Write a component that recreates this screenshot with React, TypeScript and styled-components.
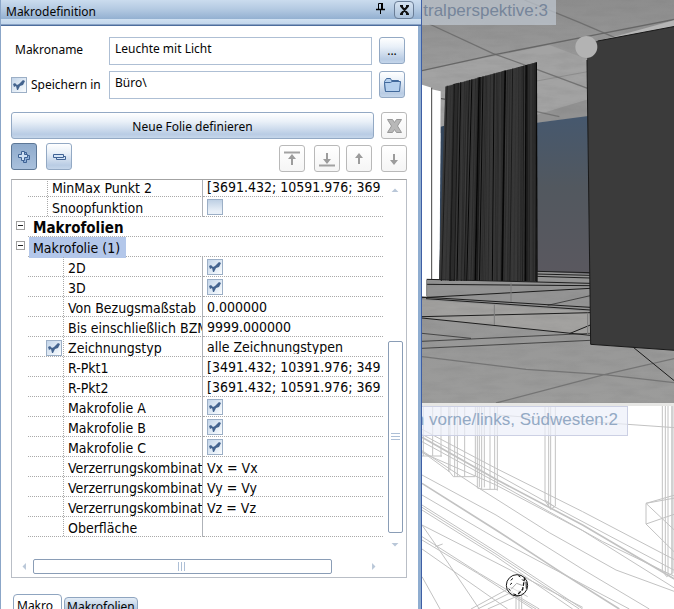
import React, { useState } from "react";
import styled, { createGlobalStyle, css } from "styled-components";

const uiFont = `"Noto Sans", "Open Sans", sans-serif`;
const gridFont = `"DejaVu Sans Condensed", "DejaVu Sans", sans-serif`;

const GlobalStyle = createGlobalStyle`
  *, *::before, *::after { box-sizing: border-box; }
  body { margin: 0; background: #fff; color: #050505; font: 12px/16px ${uiFont}; overflow: hidden; }
  button, input { font: inherit; color: inherit; margin: 0; padding: 0; }
`;

const Workspace = styled.div`
  display: flex;
  height: 100vh;
  overflow: hidden;
`;

/* ---------- docked panel ---------- */

const Panel = styled.section`
  flex: 5 1 0;
  min-width: 0;
  display: flex;
  flex-direction: column;
  background: #fff;
  border-left: 1px solid #8ba6c8;
  border-right: 1px solid #3f5fa5;
  overflow: hidden;
`;

const TitleBar = styled.header`
  flex: none;
  display: flex;
  align-items: center;
  height: 26px;
  padding: 0 7px 6px 5px;
  background: linear-gradient(#cbdcee 0, #b4cae2 9px, #93b0d1 19px, #cfe0f1 19px, #c3d7ec 24px, #4d6d9d 25px);
`;

const Title = styled.h1`
  flex: 1;
  margin: 4px 0 0;
  font-size: 12px;
  line-height: 16px;
  font-weight: 400;
`;

const PinButton = styled.button`
  width: 14px;
  height: 18px;
  margin-right: 7px;
  border: 0;
  background: none;
  svg { display: block; margin: 0 auto 4px; }
`;

const CloseButton = styled.button`
  display: grid;
  place-items: center;
  width: 20px;
  height: 18px;
  border: 1px solid #6a7d96;
  border-radius: 4px;
  background: linear-gradient(#d6e3f1, #a9c0da);
`;

const PanelBody = styled.div`
  flex: 1;
  padding: 11px 11px 0 10px;
  border-right: 3px solid #8fadd0;
`;

const Form = styled.div`
  display: grid;
  grid-template-columns: 91px minmax(0, 1fr) 26px;
  gap: 6px 7px;
  padding-right: 2px;
`;

const FieldLabel = styled.label`
  display: flex;
  align-items: center;
  gap: 4px;
  white-space: nowrap;
`;

const IndentedLabel = styled(FieldLabel)`
  padding: 0 0 2px 4px;
`;

const TextField = styled.input`
  width: 100%;
  height: 28px;
  padding: 0 6px 5px 5px;
  border: 1px solid #aebfd4;
  background: #fff;
  outline: none;
`;

const buttonLooks = {
  normal: css`
    border-color: #93a9c4;
    background: linear-gradient(#fff 0%, #e9f0f8 35%, #b9cce4 85%, #c5d6ea 100%);
  `,
  pressed: css`
    border-color: #5d7796;
    background: linear-gradient(#8fabcc, #a9c0dc);
  `,
  muted: css`
    border-color: #b9b9b9;
    background: linear-gradient(#fff, #f5f5f5);
  `,
};

const Button = styled.button<{ $look?: keyof typeof buttonLooks }>`
  display: grid;
  place-items: center;
  width: 26px;
  height: 27px;
  border: 1px solid;
  border-radius: 3px;
  ${(p) => buttonLooks[p.$look ?? "normal"]}
  svg { display: block; }
`;

const WideButton = styled(Button)`
  flex: 1;
  width: auto;
  padding-top: 2px;
`;

const DefineRow = styled.div`
  display: flex;
  gap: 7px;
  margin-top: 13px;
`;

const Toolbar = styled.div`
  display: flex;
  justify-content: space-between;
  height: 29px;
  margin-top: 4px;
`;

const ToolGroup = styled.div<{ $end?: boolean }>`
  display: flex;
  gap: 9px;
  align-items: ${(p) => (p.$end ? "flex-end" : "flex-start")};
`;

const MovePair = styled.div<{ $wide?: boolean }>`
  display: flex;
  gap: 9px;
  margin-left: ${(p) => (p.$wide ? "0" : "-3px")};
`;

/* ---------- tick box ---------- */

const TickBox = styled.span`
  display: inline-grid;
  flex: none;
  width: 16px;
  height: 16px;
  > * { grid-area: 1 / 1; }
  input {
    appearance: none;
    width: 16px;
    height: 16px;
    border: 1px solid #9cafc6;
    background: linear-gradient(135deg, #c3d5ea, #e4edf6 60%, #fbfdff);
  }
  input:not(:checked) { background: linear-gradient(#bed0e4, #e9f0f8 80%); }
  svg { pointer-events: none; visibility: hidden; }
  input:checked + svg { visibility: visible; }
`;

function Tick({ label, on, id }: { label?: string; on: boolean; id?: string }) {
  const [checked, setChecked] = useState(on);
  return (
    <TickBox>
      <input
        type="checkbox"
        id={id}
        aria-label={label}
        checked={checked}
        onChange={(e) => setChecked(e.target.checked)}
      />
      <svg width="16" height="16" viewBox="0 0 16 16" aria-hidden="true">
        <path d="M2 7l2-1 2 2 2-1 4-4 2 1-2 4-3 1-2 4H6L5 9 3 10z" fill="#44648f" />
      </svg>
    </TickBox>
  );
}

/* ---------- property grid ---------- */

const GridFrame = styled.div`
  display: grid;
  grid-template-columns: minmax(0, 1fr) 23px;
  margin-top: 7px;
  border: 1px solid #b9bec6;
  border-top-color: #a3a3a3;
`;

const GridViewport = styled.div`
  overflow: hidden;
  padding-bottom: 19px;
`;

const Table = styled.table`
  width: 100%;
  margin-top: -3px;
  table-layout: fixed;
  border-collapse: separate;
  border-spacing: 0;
  font: 14px/22px ${gridFont};
  white-space: nowrap;
  td, th { padding: 0; height: 20px; text-align: left; font-weight: 400; vertical-align: top; }
`;

const GutterCell = styled.td`
  width: 16px;
`;

const NameCell = styled.th`
  width: 175px;
  border-bottom: 1px dotted #a9a9a9;
  border-right: 1px solid #aeb2b8;
`;

const ValueCell = styled.td`
  border-bottom: 1px dotted #a9a9a9;
`;

const GroupCell = styled.th`
  border-bottom: 1px dotted #a9a9a9;
`;

const NameBox = styled.div<{ $deep?: boolean }>`
  display: grid;
  grid-template-columns: ${(p) => (p.$deep ? "35px" : "19px")} minmax(0, 1fr);
  height: 19px;
`;

const IndentSlot = styled.div`
  display: flex;
  justify-content: flex-end;
  padding: 3px 1px 0 0;
  height: 19px;
  line-height: 16px;
`;

const NameText = styled.div`
  height: 19px;
  padding-left: 4px;
  overflow: hidden;
  border-left: 1px dotted #a9a9a9;
`;

const ValueBox = styled.div<{ $plain?: boolean }>`
  height: ${(p) => (p.$plain ? 19 : 17)}px;
  padding-left: 4px;
  overflow: hidden;
  line-height: ${(p) => (p.$plain ? 22 : 20)}px;
`;

const TickValue = styled.div`
  display: flex;
  height: 19px;
  padding: 2px 0 0 4px;
`;

const GroupName = styled.div<{ $bold?: boolean; $selected?: boolean }>`
  width: max-content;
  height: 19px;
  margin-left: 1px;
  padding: 0 6px 0 4px;
  font-size: ${(p) => (p.$bold ? 15 : 14)}px;
  font-weight: ${(p) => (p.$bold ? 700 : 400)};
  ${(p) => p.$selected && css`
    background: #b3c7ea;
    box-shadow: 0 2px 0 #b3c7ea;
  `}
`;

const Expander = styled.button`
  display: grid;
  place-items: center;
  width: 9px;
  height: 9px;
  margin: 4px 0 0 4px;
  border: 1px solid #a0a0a0;
  background: #fff;
  &::after { content: ""; width: 5px; height: 1px; background: #222; }
`;

type Row =
  | { kind: "group"; name: string; bold?: boolean; selected?: boolean }
  | { kind: "text"; name: string; value: string; plain?: boolean; deep?: boolean; lead?: boolean }
  | { kind: "tick"; name: string; on: boolean; deep?: boolean };

const rows: Row[] = [
  { kind: "text", name: "MinMax Punkt 2", value: "[3691.432; 10591.976; 369" },
  { kind: "tick", name: "Snoopfunktion", on: false },
  { kind: "group", name: "Makrofolien", bold: true },
  { kind: "group", name: "Makrofolie (1)", selected: true },
  { kind: "tick", name: "2D", on: true, deep: true },
  { kind: "tick", name: "3D", on: true, deep: true },
  { kind: "text", name: "Von Bezugsmaßstab", value: "0.000000", deep: true },
  { kind: "text", name: "Bis einschließlich BZM", value: "9999.000000", deep: true },
  { kind: "text", name: "Zeichnungstyp", value: "alle Zeichnungstypen", deep: true, lead: true },
  { kind: "text", name: "R-Pkt1", value: "[3491.432; 10391.976; 349", deep: true },
  { kind: "text", name: "R-Pkt2", value: "[3691.432; 10591.976; 369", deep: true },
  { kind: "tick", name: "Makrofolie A", on: true, deep: true },
  { kind: "tick", name: "Makrofolie B", on: true, deep: true },
  { kind: "tick", name: "Makrofolie C", on: true, deep: true },
  { kind: "text", name: "Verzerrungskombinat", value: "Vx = Vx", plain: true, deep: true },
  { kind: "text", name: "Verzerrungskombinat", value: "Vy = Vy", plain: true, deep: true },
  { kind: "text", name: "Verzerrungskombinat", value: "Vz = Vz", plain: true, deep: true },
  { kind: "text", name: "Oberfläche", value: "", deep: true },
];

function PropertyRow({ row }: { row: Row }) {
  if (row.kind === "group") {
    return (
      <tr>
        <GutterCell><Expander type="button" aria-label={row.name} aria-expanded="true" /></GutterCell>
        <GroupCell colSpan={2} scope="rowgroup">
          <GroupName $bold={row.bold} $selected={row.selected}>{row.name}</GroupName>
        </GroupCell>
      </tr>
    );
  }
  return (
    <tr>
      <GutterCell />
      <NameCell scope="row">
        <NameBox $deep={row.deep}>
          <IndentSlot>{row.kind === "text" && row.lead && <Tick on label={row.name} />}</IndentSlot>
          <NameText>{row.name}</NameText>
        </NameBox>
      </NameCell>
      <ValueCell>
        {row.kind === "tick" ? (
          <TickValue><Tick on={row.on} label={row.name} /></TickValue>
        ) : (
          <ValueBox $plain={row.plain}>{row.value}</ValueBox>
        )}
      </ValueCell>
    </tr>
  );
}

/* ---------- scroll bars ---------- */

const VerticalBar = styled.div`
  display: flex;
  flex-direction: column;
  align-items: center;
  padding: 6px 0 7px 1px;
`;

const HorizontalBar = styled.div`
  display: flex;
  align-items: center;
  height: 21px;
  padding: 0 5px 0 8px;
`;

const Space = styled.div<{ $grow: number }>`
  flex: ${(p) => p.$grow} 1 0;
`;

const Thumb = styled.div<{ $grow: number; $vertical?: boolean }>`
  flex: ${(p) => p.$grow} 1 0;
  display: grid;
  place-items: center;
  ${(p) => (p.$vertical ? "width: 15px;" : "height: 15px;")}
  border: 1px solid #8a9db6;
  border-radius: 2px;
  background: #fff;
`;

const Arrow = styled.span<{ $dir: "up" | "down" | "left" | "right" }>`
  flex: none;
  width: 9px;
  height: 9px;
  background: #b9c7d8;
  clip-path: ${(p) =>
    ({
      up: "polygon(12% 66%, 50% 28%, 88% 66%)",
      down: "polygon(12% 34%, 88% 34%, 50% 72%)",
      left: "polygon(66% 12%, 66% 88%, 28% 50%)",
      right: "polygon(34% 12%, 34% 88%, 72% 50%)",
    })[p.$dir]};
`;

const Grip = styled.span<{ $vertical?: boolean }>`
  width: 9px;
  height: 9px;
  background: repeating-linear-gradient(
    ${(p) => (p.$vertical ? "180deg" : "90deg")}, #adbfd6 0 1px, #fff 1px 3px
  );
`;

/* ---------- tabs ---------- */

const Tabs = styled.div`
  display: flex;
  align-items: flex-start;
  gap: 2px;
  margin: 16px 0 0 2px;
`;

const Tab = styled.button<{ $active?: boolean }>`
  height: 26px;
  margin-top: ${(p) => (p.$active ? 0 : 3)}px;
  padding: ${(p) => (p.$active ? "0 8px 2px 3px" : "0 2px 6px 2px")};
  border: 1px solid #8fa5c0;
  border-radius: 4px 4px 0 0;
  background: ${(p) => (p.$active ? "#fff" : "linear-gradient(#e3ecf6, #a9c0dc 60%)")};
`;

/* ---------- viewports ---------- */

const Views = styled.main`
  flex: 3 1 0;
  min-width: 0;
  display: grid;
  grid-template-rows: minmax(0, 2fr) minmax(0, 1fr);
`;

const View = styled.section<{ $ruled?: boolean }>`
  position: relative;
  overflow: hidden;
  background: #fff;
  ${(p) => p.$ruled && "border-bottom: 3px solid #e6e6e4;"}
`;

const Drawing = styled.svg`
  display: block;
  width: 100%;
  height: 100%;
`;

const ViewLabel = styled.div<{ $outlined?: boolean }>`
  position: absolute;
  top: 0;
  left: 0;
  display: flex;
  justify-content: flex-end;
  align-items: center;
  overflow: hidden;
  width: ${(p) => (p.$outlined ? 206 : 134)}px;
  height: ${(p) => (p.$outlined ? 30 : 25)}px;
  padding: ${(p) => (p.$outlined ? "0 9px 2px 0" : "0 8px 4px 0")};
  border: ${(p) => (p.$outlined ? "1px solid #ccd0e4" : "0")};
  border-left: 0;
  background: ${(p) => (p.$outlined ? "rgba(236, 240, 250, 0.7)" : "rgba(190, 197, 207, 0.75)")};
  color: ${(p) => (p.$outlined ? "#93a9c4" : "#76859a")};
  font: 17px/20px "Liberation Sans", Arial, sans-serif;
  white-space: nowrap;
`;

const curtainFolds = Array.from({ length: 74 }, (_, i) => {
  const seed = (i * 7919 + 31) % 97;
  const x = 90 + i * 3 + (i * 52) / 74;
  return {
    top: x,
    bottom: 74 + ((x - 90) * 288) / 272 + ((seed % 9) - 4),
    start: 258 - ((x - 90) * 71) / 272,
    width: seed % 7 === 0 ? 5 : seed % 3 === 0 ? 3 : 1,
    color: seed % 4 === 0 ? "#060606" : seed % 4 === 1 ? "#1a1a1a" : "#2b2b2b",
  };
});

function PerspectiveScene() {
  return (
    <Drawing viewBox="18 0 759 1209" preserveAspectRatio="xMinYMin slice" role="img" aria-label="Zentralperspektive">
      <defs>
        <linearGradient id="ceiling" x1="0" y1="0" x2="0" y2="1">
          <stop offset="0" stopColor="#8d8d8d" />
          <stop offset="1" stopColor="#a8a8a8" />
        </linearGradient>
        <linearGradient id="dusk" x1="0" y1="0" x2="0" y2="1">
          <stop offset="0" stopColor="#46586e" />
          <stop offset="0.45" stopColor="#52585f" />
          <stop offset="1" stopColor="#5a585f" />
        </linearGradient>
        <linearGradient id="floor" x1="0" y1="0" x2="0" y2="1">
          <stop offset="0" stopColor="#939393" />
          <stop offset="1" stopColor="#9c9c9b" />
        </linearGradient>
        <filter id="concrete" x="0" y="0" width="100%" height="100%">
          <feTurbulence type="fractalNoise" baseFrequency="0.012 0.05" numOctaves="5" seed="8" />
          <feColorMatrix values="0 0 0 0 0.2  0 0 0 0 0.2  0 0 0 0 0.2  1.1 0 0 0 -0.42" />
        </filter>
      </defs>

      <path d="M18 0H777V400H18z" fill="url(#ceiling)" />
      <path d="M18 212L400 135L520 180V350L360 368L75 380L18 254z" fill="#a3a3a3" />
      <path d="M360 345L520 297V350L360 368z" fill="#929292" />
      <path d="M18 780H777V1209H18z" fill="url(#floor)" />
      <path d="M30 838L523 835V935L18 895V890z" fill="#949494" />
      <path d="M18 900L523 935V1006L18 953z" fill="#a3a2a0" />
      <path d="M18 0H777V400H18zM18 835H777V1209H18z" filter="url(#concrete)" opacity="0.4" />

      <g fill="none" stroke="#666" strokeWidth="4">
        <path d="M18 212L240 163L560 100L777 58" />
        <path d="M40 72L230 160L362 208L515 265" opacity="0.8" />
        <path d="M325 0L490 67L595 112" opacity="0.8" />
        <path d="M362 243L515 215" opacity="0.5" strokeWidth="2" />
        <path d="M362 335L430 350" opacity="0.7" />
      </g>
      <path d="M595 110L777 60V80L545 122z" fill="#b5b5b5" />

      <path d="M74 380L90 376V838H70z" fill="#34465c" />
      <path d="M18 254L47 263V268L74 274V300L69 838H32V892H18z" fill="#fff" />
      <path d="M47 263V838M75 296L90 298" stroke="#444" strokeWidth="3" fill="none" />

      <path d="M362 368L517 348L523 822L362 814z" fill="url(#dusk)" />
      <path d="M88 260L361 187L363 846L69 838z" fill="#3c3c3c" />
      {curtainFolds.map((f, i) => (
        <path key={i} d={`M${f.top} ${f.start}L${f.bottom} 843`} stroke={f.color} strokeWidth={f.width} />
      ))}
      <path d="M361 187L363 846" stroke="#0a0a0a" strokeWidth="4" />

      <g fill="none" stroke="#1d1d1d" strokeWidth="3">
        <path d="M362 814L523 818M362 822L523 826M362 829L523 834" />
        <path d="M32 838L363 846L523 850M32 853L523 857" />
        <path d="M18 893L523 865M18 891L523 922M30 896L523 930" />
        <path d="M395 916L523 887" strokeWidth="2" />
        <path d="M18 950L523 938M18 954L523 1006M460 1001L523 975" />
        <path d="M18 1024L523 1000M18 1045L523 1021M18 1000L165 1015" strokeWidth="2" />
      </g>
      <path d="M32 840V888M285 848V906M235 914V975M515 938V1004" stroke="#7c7c7c" strokeWidth="3" />
      <path d="M18 1070L330 1108L565 1124L777 1148M240 1209L565 1124L777 1075" fill="none" stroke="#747474" strokeWidth="4" />

      <path d="M514 170L516 128L777 79V1051L524 1033L513 180z" fill="#3b3b3b" />
      <path d="M513 180L524 1033L777 1051M545 123L777 79" stroke="#191919" strokeWidth="3" fill="none" />
      <path d="M652 1042L777 1144" stroke="#1b1b1b" strokeWidth="3" />
      <circle cx="511" cy="141" r="33" fill="#b3b3b3" />
    </Drawing>
  );
}

function WireframeScene() {
  return (
    <Drawing viewBox="18 18 759 609" preserveAspectRatio="xMinYMin slice" role="img" aria-label="Südwesten">
      <g fill="none" stroke="#c2c2c2" strokeWidth="3">
        <path d="M22 18V168M50 18V168M75 18V170M98 18V215M102 18V212M116 18V230M124 18V230M146 18V230M178 18V228M184 18V264M190 18V262M197 18V268M205 18V262M222 18V268M236 18V268M244 18V272" />
        <path d="M18 168H78M98 212L112 230H178M184 264L200 268H244" />
        <path d="M387 18V302L404 328L418 318V18M398 18V322M404 18V328M387 300L418 322" />
        <path d="M739 18V512L752 530L768 520V18M748 18V522M756 18V528M768 18V524M774 18V520" />
        <path d="M777 285L690 310V372L777 342M690 310L777 392M690 372L777 458M690 310L777 294M244 45L420 58L777 83" />
        <path d="M18 88L240 205L500 335L777 480" />
        <path d="M18 103L240 222L430 328L777 512" />
        <path d="M18 112L240 238L500 375L777 538" strokeWidth="5" />
        <path d="M18 125L240 246L560 425L777 530" />
        <path d="M18 152L185 262L400 398L600 510L777 575" />
        <path d="M18 158L240 255L500 392L777 565" />
        <path d="M18 225L240 345L500 508L700 627" />
        <path d="M18 250L240 390L440 520L610 627" strokeWidth="5" />
        <path d="M18 285L240 415L430 516L640 627" />
        <path d="M18 315L240 455L500 627M18 322L240 462L490 627M18 330L235 466L470 627" />
        <path d="M18 375L240 488L500 622M18 410L190 520L370 627M18 420L185 520L350 627M18 447L275 627" />
        <path d="M18 375L70 450L190 627M18 530L72 627M18 155L100 215M58 440L80 432" />
        <path d="M165 627L285 562L335 590M185 627L290 575M215 627L300 590L360 627M300 585V627M309 570V627M317 585V627" />
      </g>
      <circle cx="303" cy="556" r="32" fill="rgba(255,255,255,.5)" stroke="#161616" strokeWidth="3" />
      <g fill="none" stroke="#161616" strokeWidth="3">
        <path d="M326 532L320 568L302 587" strokeDasharray="11 4" strokeWidth="4" />
        <path d="M284 541L291 535M288 549L282 554M307 527L313 531M278 566L283 572M330 545L331 566M292 582L300 584M318 538L324 544" />
      </g>
      <path d="M285 568L302 550L318 556" fill="none" stroke="#aaa" strokeWidth="3" />
    </Drawing>
  );
}

/* ---------- icons ---------- */

const PinIcon = () => (
  <svg width="9" height="11" viewBox="0 0 9 11" fill="none" stroke="#000" aria-hidden="true">
    <path d="M2.500 6V.5H6.500V6M4.500 7V11" />
    <path d="M6 0V6" strokeWidth="2" />
    <path d="M0 6.500H9" strokeWidth="1.500" />
  </svg>
);

const CloseIcon = () => (
  <svg width="11" height="10" viewBox="0 0 11 10" aria-hidden="true">
    <path d="M1 .5H4M7 .5H10M1 9.500H4M7 9.500H10M2 1L9 9M9 1L2 9" stroke="#111" strokeWidth="2" fill="none" />
  </svg>
);

const FolderIcon = () => (
  <svg width="17" height="16" viewBox="0 0 17 16" fill="#b5d0ee" stroke="#41699c" aria-hidden="true">
    <path d="M1.500 14.500L.5 4.500L2.500 1.500H6.500L7.500 3.500H14.500V5.500" />
    <path d="M1.500 14.500L.5 5.500H6.500L8 4.500H16.500L15.500 14.500z" />
  </svg>
);

const DeleteIcon = () => (
  <svg width="15" height="14" viewBox="0 0 15 14" aria-hidden="true">
    <path d="M.5 .5H5.500L7.500 3.500L9.500 .5H14.500L10.500 7L14.500 13.500H9.500L7.500 10.500L5.500 13.500H.5L4.500 7z" fill="#b8b8b8" stroke="#989898" />
  </svg>
);

const PlusIcon = () => (
  <svg width="14" height="14" viewBox="0 0 14 14" fill="#cfe0f3" stroke="#3f6294" aria-hidden="true">
    <path d="M6.500 4.500V2.500H9.500V5.500H12.500V9.500H9.500V12.500H6.500V9.500" fill="#90b0d8" />
    <path d="M4.500 1.500H7.500V4.500H10.500V7.500H7.500V10.500H4.500V7.500H1.500V4.500H4.500z" />
  </svg>
);

const MinusIcon = () => (
  <svg width="13" height="8" viewBox="0 0 13 8" fill="#d5e5f7" stroke="#3f6294" aria-hidden="true">
    <path d="M3.500 3.500H12.500V6.500H3.500z" />
    <path d="M.5 1.500H10.500V4.500H.5z" />
  </svg>
);

function MoveIcon({ up, bar }: { up?: boolean; bar?: boolean }) {
  return (
    <svg width="16" height="16" viewBox="0 0 16 16" aria-hidden="true">
      <g transform={up ? undefined : "matrix(1 0 0 -1 0 16)"}>
        {bar && <path d="M0 1.500H16" stroke="#a2a2a2" strokeWidth="2" />}
        <path d={bar ? "M8 3L12 8H9V14H7V8H4z" : "M8 2L12 7H9V13H7V7H4z"} fill="#9c9c9c" />
      </g>
    </svg>
  );
}

export default function App() {
  return (
    <Workspace>
      <GlobalStyle />
      <Panel>
        <TitleBar>
          <Title>Makrodefinition</Title>
          <PinButton type="button" aria-label="Anheften"><PinIcon /></PinButton>
          <CloseButton type="button" aria-label="Schließen"><CloseIcon /></CloseButton>
        </TitleBar>
        <PanelBody>
          <Form>
            <IndentedLabel htmlFor="macro-name">Makroname</IndentedLabel>
            <TextField id="macro-name" defaultValue="Leuchte mit Licht" />
            <Button type="button">...</Button>
            <FieldLabel htmlFor="save-in">
              <Tick on id="save-in" />
              Speichern in
            </FieldLabel>
            <TextField aria-label="Ordner" defaultValue={"Büro\\"} />
            <Button type="button" aria-label="Ordner wählen"><FolderIcon /></Button>
          </Form>

          <DefineRow>
            <WideButton type="button">Neue Folie definieren</WideButton>
            <Button type="button" $look="muted" aria-label="Löschen"><DeleteIcon /></Button>
          </DefineRow>

          <Toolbar>
            <ToolGroup>
              <Button type="button" $look="pressed" aria-label="Aufklappen"><PlusIcon /></Button>
              <Button type="button" aria-label="Zuklappen"><MinusIcon /></Button>
            </ToolGroup>
            <ToolGroup $end>
              <MovePair $wide>
                <Button type="button" $look="muted" aria-label="Ganz nach oben"><MoveIcon up bar /></Button>
                <Button type="button" $look="muted" aria-label="Ganz nach unten"><MoveIcon bar /></Button>
              </MovePair>
              <MovePair>
                <Button type="button" $look="muted" aria-label="Nach oben"><MoveIcon up /></Button>
                <Button type="button" $look="muted" aria-label="Nach unten"><MoveIcon /></Button>
              </MovePair>
            </ToolGroup>
          </Toolbar>

          <GridFrame>
            <GridViewport>
              <Table>
                <colgroup>
                  <col width="16" />
                  <col width="175" />
                  <col />
                </colgroup>
                <tbody>
                  {rows.map((row, i) => <PropertyRow key={i} row={row} />)}
                </tbody>
              </Table>
            </GridViewport>
            <VerticalBar>
              <Arrow $dir="up" />
              <Space $grow={147} />
              <Thumb $vertical $grow={191}><Grip $vertical /></Thumb>
              <Space $grow={7} />
              <Arrow $dir="down" />
            </VerticalBar>
            <HorizontalBar>
              <Arrow $dir="left" />
              <Space $grow={4} />
              <Thumb $grow={299}><Grip /></Thumb>
              <Space $grow={37} />
              <Arrow $dir="right" />
            </HorizontalBar>
          </GridFrame>

          <Tabs>
            <Tab type="button" $active>Makro</Tab>
            <Tab type="button">Makrofolien</Tab>
          </Tabs>
        </PanelBody>
      </Panel>

      <Views>
        <View $ruled>
          <PerspectiveScene />
          <ViewLabel>tralperspektive:3</ViewLabel>
        </View>
        <View>
          <WireframeScene />
          <ViewLabel $outlined>n vorne/links, Südwesten:2</ViewLabel>
        </View>
      </Views>
    </Workspace>
  );
}
